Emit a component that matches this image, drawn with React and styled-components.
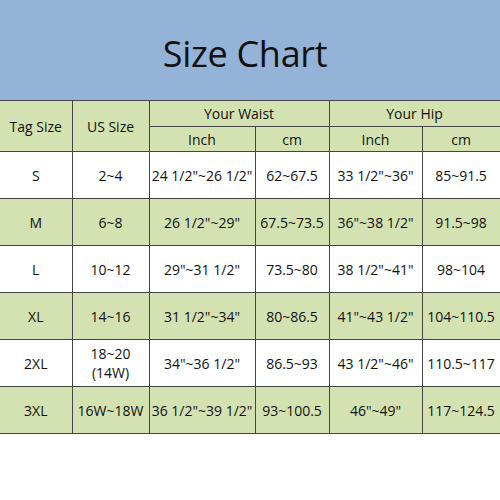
import styled, { createGlobalStyle } from 'styled-components'

const Global = createGlobalStyle`
  body {
    margin: 0;
    background: #ffffff;
    font-family: "Open Sans", "Noto Sans", sans-serif;
    color: #111;
  }
`

const Page = styled.div`
  width: 500px;
  height: 500px;
  overflow: hidden;
  background: #fff;
`

const Banner = styled.div`
  height: 100px;
  background: #95b3d7;
  display: flex;
  align-items: center;
  justify-content: center;
  padding-right: 10px;
  box-sizing: border-box;
`

const Title = styled.h1`
  margin: 6px 0 0;
  font-size: 36px;
  font-weight: 400;
  letter-spacing: -0.3px;
  color: #111;
`

const Table = styled.table`
  width: 500px;
  border-collapse: collapse;
  table-layout: fixed;
  font-size: 14px;
`

const Col = styled.col`
  width: ${p => p.$w}px;
`

const Cell = styled.td`
  border: 1px solid #454545;
  background: ${p => (p.$green ? '#d4e2b2' : '#ffffff')};
  height: 46px;
  padding: 0;
  text-align: center;
  vertical-align: middle;
  line-height: 19px;
  white-space: nowrap;
  &:first-child {
    border-left: none;
  }
`

const HeadCell = styled.th`
  border: 1px solid #454545;
  background: #d4e2b2;
  height: ${p => p.$h}px;
  padding: 0;
  font-weight: 400;
  text-align: center;
  vertical-align: middle;
  white-space: nowrap;
  &:first-child {
    border-left: none;
  }
`

const widths = [72, 77, 106, 74, 93, 78]

const rows = [
  ['S', '2~4', '24 1/2"~26 1/2"', '62~67.5', '33 1/2"~36"', '85~91.5'],
  ['M', '6~8', '26 1/2"~29"', '67.5~73.5', '36"~38 1/2"', '91.5~98'],
  ['L', '10~12', '29"~31 1/2"', '73.5~80', '38 1/2"~41"', '98~104'],
  ['XL', '14~16', '31 1/2"~34"', '80~86.5', '41"~43 1/2"', '104~110.5'],
  ['2XL', ['18~20', '(14W)'], '34"~36 1/2"', '86.5~93', '43 1/2"~46"', '110.5~117'],
  ['3XL', '16W~18W', '36 1/2"~39 1/2"', '93~100.5', '46"~49"', '117~124.5'],
]

const App = () => {
  return (
    <Page>
      <Global />
      <Banner>
        <Title>Size Chart</Title>
      </Banner>
      <Table>
        <colgroup>
          {widths.map((w, i) => (
            <Col key={i} $w={w} />
          ))}
        </colgroup>
        <thead>
          <tr>
            <HeadCell $h={25} rowSpan={2}>Tag Size</HeadCell>
            <HeadCell $h={25} rowSpan={2}>US Size</HeadCell>
            <HeadCell $h={25} colSpan={2}>Your Waist</HeadCell>
            <HeadCell $h={25} colSpan={2}>Your Hip</HeadCell>
          </tr>
          <tr>
            <HeadCell $h={24}>Inch</HeadCell>
            <HeadCell $h={24}>cm</HeadCell>
            <HeadCell $h={24}>Inch</HeadCell>
            <HeadCell $h={24}>cm</HeadCell>
          </tr>
        </thead>
        <tbody>
          {rows.map((r, i) => (
            <tr key={i}>
              {r.map((c, j) => (
                <Cell key={j} $green={i % 2 === 1}>
                  {Array.isArray(c) ? (
                    <>
                      {c[0]}
                      <br />
                      {c[1]}
                    </>
                  ) : (
                    c
                  )}
                </Cell>
              ))}
            </tr>
          ))}
        </tbody>
      </Table>
    </Page>
  )
}

export default App
